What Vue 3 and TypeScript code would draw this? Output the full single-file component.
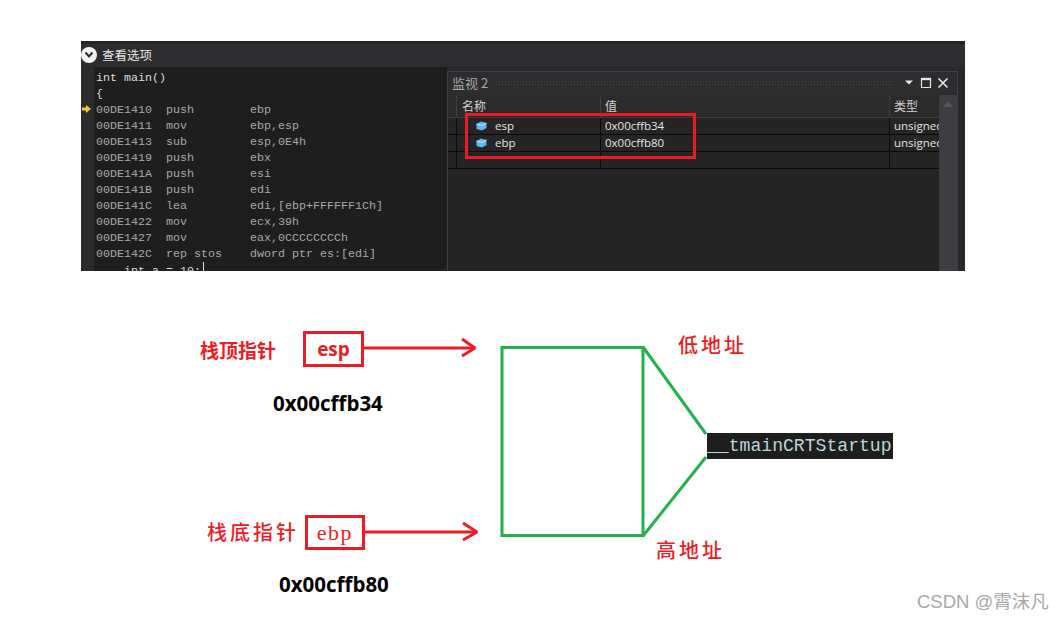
<script setup lang="ts">
interface AsmLine { addr: string; op: string; arg: string }
const asm: AsmLine[] = [
  { addr: '00DE1410', op: 'push', arg: 'ebp' },
  { addr: '00DE1411', op: 'mov', arg: 'ebp,esp' },
  { addr: '00DE1413', op: 'sub', arg: 'esp,0E4h' },
  { addr: '00DE1419', op: 'push', arg: 'ebx' },
  { addr: '00DE141A', op: 'push', arg: 'esi' },
  { addr: '00DE141B', op: 'push', arg: 'edi' },
  { addr: '00DE141C', op: 'lea', arg: 'edi,[ebp+FFFFFF1Ch]' },
  { addr: '00DE1422', op: 'mov', arg: 'ecx,39h' },
  { addr: '00DE1427', op: 'mov', arg: 'eax,0CCCCCCCCh' },
  { addr: '00DE142C', op: 'rep stos', arg: 'dword ptr es:[edi]' },
]
const rows = [
  { name: 'esp', value: '0x00cffb34', type: 'unsigned' },
  { name: 'ebp', value: '0x00cffb80', type: 'unsigned' },
  { name: '', value: '', type: '' },
]
</script>

<template>
  <div class="page">
    <section class="ide">
      <header class="toolbar">
        <span class="circle">
          <svg width="10" height="8" viewBox="0 0 10 8"><path d="M1.500 1.500 5 5.500l3.500-4" fill="none" stroke="#2d2d30" stroke-width="2" /></svg>
        </span>
        <span class="toolbar-title">查看选项</span>
      </header>
      <div class="ide-body">
        <div class="gutter">
          <svg class="exec" width="9" height="8" viewBox="0 0 9 8"><path d="M0 2.500h4V0l5 4-5 4V5.500H0z" fill="#f5c83c" /></svg>
        </div>
        <div class="code">
          <div class="line src">int main()</div>
          <div class="line src">{</div>
          <div v-for="l in asm" :key="l.addr" class="line asm"><span class="addr">{{ l.addr }}</span><span class="op">{{ l.op }}</span><span>{{ l.arg }}</span></div>
          <div class="line src indent">int a = 10;<span class="caret"></span></div>
        </div>
        <div class="watch">
          <div class="watch-title">
            <span class="watch-name">监视 2</span>
            <span class="grip"></span>
            <svg class="win-icons" width="44" height="12" viewBox="0 0 44 12">
              <path d="M0 3.500h8l-4 4z" fill="#e6e6e6" />
              <path d="M16.500 1.500h9v9h-9z" fill="none" stroke="#e6e6e6" stroke-width="1.200" />
              <path d="M16 2h10" stroke="#e6e6e6" stroke-width="2.400" />
              <path d="M33.500 1.500l9 9m0-9l-9 9" stroke="#e6e6e6" stroke-width="1.600" fill="none" />
            </svg>
          </div>
          <div class="watch-main">
            <div class="grid">
              <div class="grid-row head">
                <span class="cell c0"></span>
                <span class="cell c1">名称</span>
                <span class="cell c2">值</span>
                <span class="cell c3">类型</span>
              </div>
              <div v-for="(r, i) in rows" :key="i" class="grid-row body-row">
                <span class="cell c0"></span>
                <span class="cell c1">
                  <svg v-if="r.name" class="cube" width="11" height="10" viewBox="0 0 11 10"><path d="M0.500 3 5 0.500 10.500 2v5L6 9.500 0.500 8z" fill="#62b4f5" /><path d="M0.500 3 6 4.500 10.500 2" stroke="#d6ecff" stroke-width="0.900" fill="none" /></svg>
                  <span class="nm">{{ r.name }}</span>
                </span>
                <span class="cell c2">{{ r.value }}</span>
                <span class="cell c3">{{ r.type }}</span>
              </div>
            </div>
            <div class="scroll">
              <svg width="10" height="6" viewBox="0 0 10 6"><path d="M0 6 5 0l5 6z" fill="#55555a" /></svg>
            </div>
          </div>
          <div class="red-box"></div>
        </div>
      </div>
    </section>

    <section class="diagram">
      <svg class="wires" width="1064" height="350" viewBox="0 271 1064 350">
        <g fill="none" stroke="#ed1c24" stroke-width="3" stroke-linejoin="bevel">
          <path d="M364 348H475" />
          <path d="M462 339l13 9-13 8" />
          <path d="M365 532H477" />
          <path d="M463 523l14 9-14 8" />
        </g>
        <g fill="none" stroke="#22b14c" stroke-width="3">
          <path d="M502 347.500H643V535.500H502z" />
          <path d="M643 347 706 434" />
          <path d="M643 536 706 457" />
        </g>
      </svg>
      <span class="note bold lbl-top">栈顶指针</span>
      <span class="reg reg-esp">esp</span>
      <span class="note addr-big addr-esp">0x00cffb34</span>
      <span class="note thin lbl-bottom">栈底指针</span>
      <span class="reg reg-ebp">ebp</span>
      <span class="note addr-big addr-ebp">0x00cffb80</span>
      <span class="note thin lbl-low">低地址</span>
      <span class="note thin lbl-high">高地址</span>
      <span class="note func">__tmainCRTStartup</span>
      <span class="note mark">CSDN @霄沫凡</span>
    </section>
  </div>
</template>

<style>
html, body { margin: 0; background: #fff; }
</style>

<style scoped>
.page {
  position: relative;
  width: 1064px;
  height: 621px;
  overflow: hidden;
  background: #fff;
  padding-top: 41px;
  box-sizing: border-box;
}
.ide {
  width: 884px;
  height: 230px;
  margin-left: 81px;
  display: flex;
  flex-direction: column;
  overflow: hidden;
  background: #2d2d30;
}
.toolbar {
  flex: 0 0 26px;
  display: flex;
  align-items: center;
  gap: 5px;
  padding-top: 1px;
  box-sizing: border-box;
  background: linear-gradient(#242426 0 3px, #2d2d30 3px);
}
.circle {
  width: 16px;
  height: 16px;
  border-radius: 50%;
  background: #f4f4f4;
  display: flex;
  align-items: center;
  justify-content: center;
}
.toolbar-title {
  font: 12.500px/16px "Noto Sans CJK SC", sans-serif;
  color: #e4e4e4;
}
.ide-body {
  flex: 1;
  display: flex;
  min-height: 0;
  background: linear-gradient(90deg, #1e1e1e 366px, #29292b 366px);
}
.gutter {
  flex: 0 0 13px;
  background: #2b2b2b;
  padding-top: 38px;
  box-sizing: border-box;
}
.exec { display: block; margin-left: 1px; }
.code {
  flex: 0 0 353px;
  padding: 3px 0 0 2px;
  box-sizing: border-box;
  font: 11.670px/16px "Liberation Mono", monospace;
  white-space: pre;
}
.line { height: 16px; }
.src { color: #dcdcdc; }
.indent { padding-left: 28px; }
.asm { color: #a8a8a8; }
.addr { display: inline-block; width: 70px; }
.op { display: inline-block; width: 84px; }
.caret {
  display: inline-block;
  width: 1px;
  height: 14px;
  margin-left: 2px;
  vertical-align: -2px;
  background: #dcdcdc;
}
.watch {
  position: relative;
  flex: 0 0 510px;
  margin-top: 4px;
  border: 1px solid #3f3f46;
  border-bottom: 0;
  box-sizing: border-box;
  display: flex;
  flex-direction: column;
  background: #252526;
}
.watch-title {
  flex: 0 0 23px;
  display: flex;
  align-items: center;
  padding: 0 8px 2px 4px;
  box-sizing: border-box;
  background: #2d2d30;
}
.watch-name {
  font: 13px/16px "Noto Sans CJK SC", sans-serif;
  color: #a8a8a8;
}
.grip {
  flex: 1;
  height: 5px;
  margin: 0 11px 0 7px;
  background-image: radial-gradient(circle, #46464a 0.7px, transparent 0.8px);
  background-size: 3px 3px;
}
.win-icons { display: block; }
.watch-main { flex: 1; display: flex; min-height: 0; }
.grid { flex: 1; min-width: 0; overflow: hidden; }
.grid-row { display: flex; }
.head {
  height: 23px;
  background: #2b2b2c;
  border-bottom: 1px solid #3a3a3c;
  box-sizing: border-box;
  color: #d0d0d0;
  font: 12px/21px "Noto Sans CJK SC", sans-serif;
}
.head .cell { border-right: 1px solid #3f3f46; }
.body-row {
  height: 17px;
  background: #252526;
  border-bottom: 1px solid #0b0b0b;
  box-sizing: border-box;
  color: #e4e4e4;
  font: 11.500px/16px "Open Sans", sans-serif;
}
.body-row .cell { border-right: 1px solid #0b0b0b; }
.cell {
  display: block;
  box-sizing: border-box;
  overflow: hidden;
  white-space: nowrap;
}
.c0 { flex: 0 0 9px; }
.c1 { flex: 0 0 144px; padding-left: 5px; }
.body-row .c1 { display: flex; align-items: center; padding-left: 19px; gap: 8px; }
.c2 { flex: 0 0 289px; padding-left: 4px; }
.c3 { flex: 0 0 49px; padding-left: 4px; border-right: 0 !important; }
.cube { display: block; flex: none; }
.nm { display: block; }
.scroll {
  flex: 0 0 18px;
  background: #3e3e42;
  display: flex;
  justify-content: center;
  align-items: flex-start;
  padding-top: 6px;
  box-sizing: border-box;
}
.red-box {
  position: absolute;
  left: 17px;
  top: 41px;
  width: 231px;
  height: 46px;
  border: 3px solid #ed1c24;
  box-sizing: border-box;
}
.diagram { position: absolute; inset: 0; }
.wires { position: absolute; left: 0; top: 271px; display: block; }
.note { position: absolute; white-space: nowrap; }
.bold { font: 700 19px/24px "Noto Sans CJK SC", sans-serif; color: #ed1c24; }
.thin { font: 500 20px/26px "Noto Sans CJK SC", sans-serif; color: #ed1c24; letter-spacing: 3px; }
.lbl-top { left: 200px; top: 338px; }
.lbl-bottom { left: 207px; top: 519px; }
.lbl-low { left: 678px; top: 332px; }
.lbl-high { left: 656px; top: 537px; }
.reg {
  position: absolute;
  box-sizing: border-box;
  border: 3px solid #ed1c24;
  color: #ed1c24;
  display: flex;
  align-items: center;
  justify-content: center;
}
.reg-esp {
  left: 303px;
  top: 331px;
  width: 61px;
  height: 36px;
  font: 700 19px/1 "Open Sans", sans-serif;
}
.reg-ebp {
  left: 305px;
  top: 515px;
  width: 60px;
  height: 35px;
  font: 400 22px/1 "Liberation Serif", serif;
  letter-spacing: 1.500px;
}
.addr-big { font: 700 20.500px/26px "Open Sans", sans-serif; color: #000; }
.addr-esp { left: 273px; top: 390px; }
.addr-ebp { left: 279px; top: 571px; }
.func {
  left: 707px;
  top: 433px;
  width: 186px;
  height: 26px;
  background: #1e1e1e;
  color: #bcd4da;
  font: 18.100px/26px "Liberation Mono", monospace;
}
.mark {
  left: 917px;
  top: 590px;
  font: 18.500px/24px "Liberation Sans", "Noto Sans CJK SC", sans-serif;
  color: #a8a8a8;
}
</style>
